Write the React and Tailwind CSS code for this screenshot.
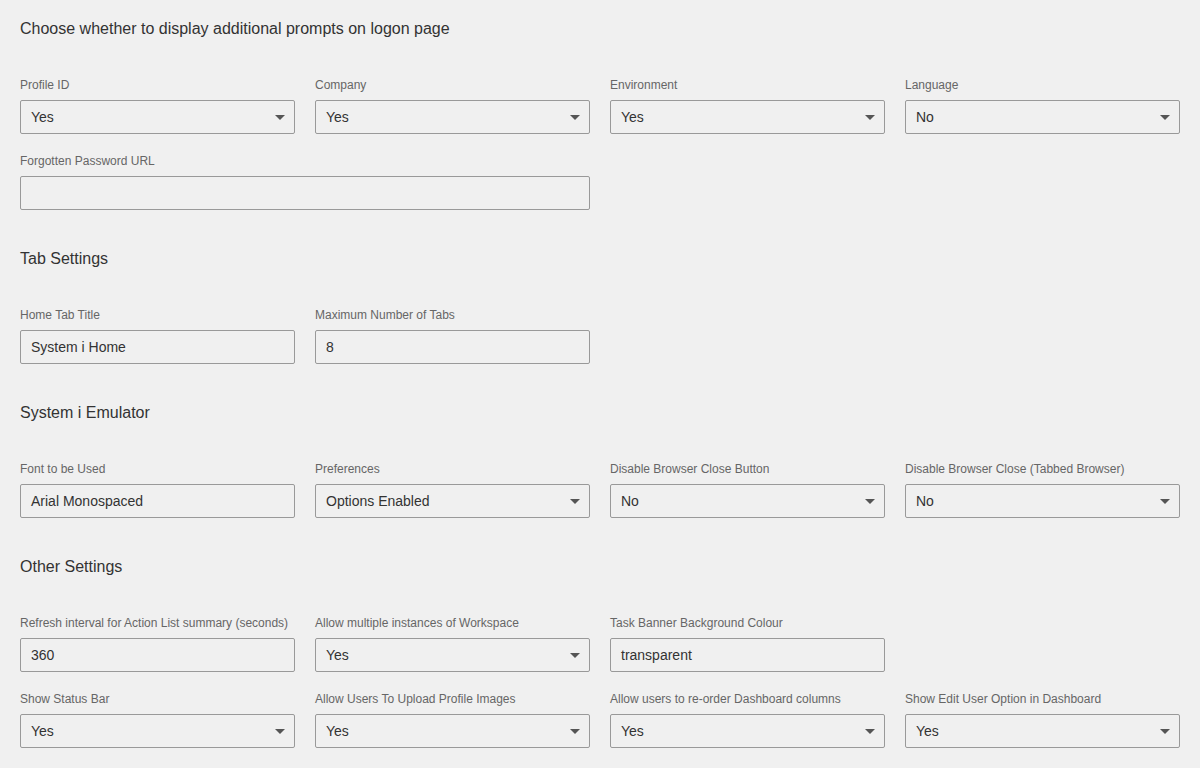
const Label = ({ children }) => (
  <div className="text-[12px] leading-[14px] text-[#666] mb-2 whitespace-nowrap">{children}</div>
);

const TextField = ({ label, value = '', className = '' }) => (
  <div className={className}>
    <Label>{label}</Label>
    <div className="h-[34px] border border-[#999] rounded-[2px] px-[10px] flex items-center text-[14px] text-[#333]">
      {value}
    </div>
  </div>
);

const SelectField = ({ label, value }) => (
  <div>
    <Label>{label}</Label>
    <div className="h-[34px] border border-[#999] rounded-[2px] pl-[10px] pr-[9px] flex items-center justify-between text-[14px] text-[#333]">
      <span>{value}</span>
      <svg width="10" height="5" viewBox="0 0 10 5" className="mt-[1px]">
        <path d="M0 0 L10 0 L5 5 Z" fill="#555" />
      </svg>
    </div>
  </div>
);

const Heading = ({ children, first }) => (
  <h2 className={`text-[16px] leading-[18px] text-[#333] mb-10 ${first ? '' : 'mt-10'}`}>{children}</h2>
);

const Row = ({ children }) => (
  <div className="grid grid-cols-4 gap-x-5 gap-y-5">{children}</div>
);

export default function App() {
  return (
    <div
      className="min-h-[768px] bg-[#f0f0f0] px-5 pt-5 pb-5"
      style={{ fontFamily: '"Liberation Sans", Arial, sans-serif' }}
    >
      <Heading first>Choose whether to display additional prompts on logon page</Heading>
      <Row>
        <SelectField label="Profile ID" value="Yes" />
        <SelectField label="Company" value="Yes" />
        <SelectField label="Environment" value="Yes" />
        <SelectField label="Language" value="No" />
        <TextField label="Forgotten Password URL" className="col-span-2" />
      </Row>

      <Heading>Tab Settings</Heading>
      <Row>
        <TextField label="Home Tab Title" value="System i Home" />
        <TextField label="Maximum Number of Tabs" value="8" />
      </Row>

      <Heading>System i Emulator</Heading>
      <Row>
        <TextField label="Font to be Used" value="Arial Monospaced" />
        <SelectField label="Preferences" value="Options Enabled" />
        <SelectField label="Disable Browser Close Button" value="No" />
        <SelectField label="Disable Browser Close (Tabbed Browser)" value="No" />
      </Row>

      <Heading>Other Settings</Heading>
      <Row>
        <TextField label="Refresh interval for Action List summary (seconds)" value="360" />
        <SelectField label="Allow multiple instances of Workspace" value="Yes" />
        <TextField label="Task Banner Background Colour" value="transparent" />
        <div />
        <SelectField label="Show Status Bar" value="Yes" />
        <SelectField label="Allow Users To Upload Profile Images" value="Yes" />
        <SelectField label="Allow users to re-order Dashboard columns" value="Yes" />
        <SelectField label="Show Edit User Option in Dashboard" value="Yes" />
      </Row>
    </div>
  );
}
